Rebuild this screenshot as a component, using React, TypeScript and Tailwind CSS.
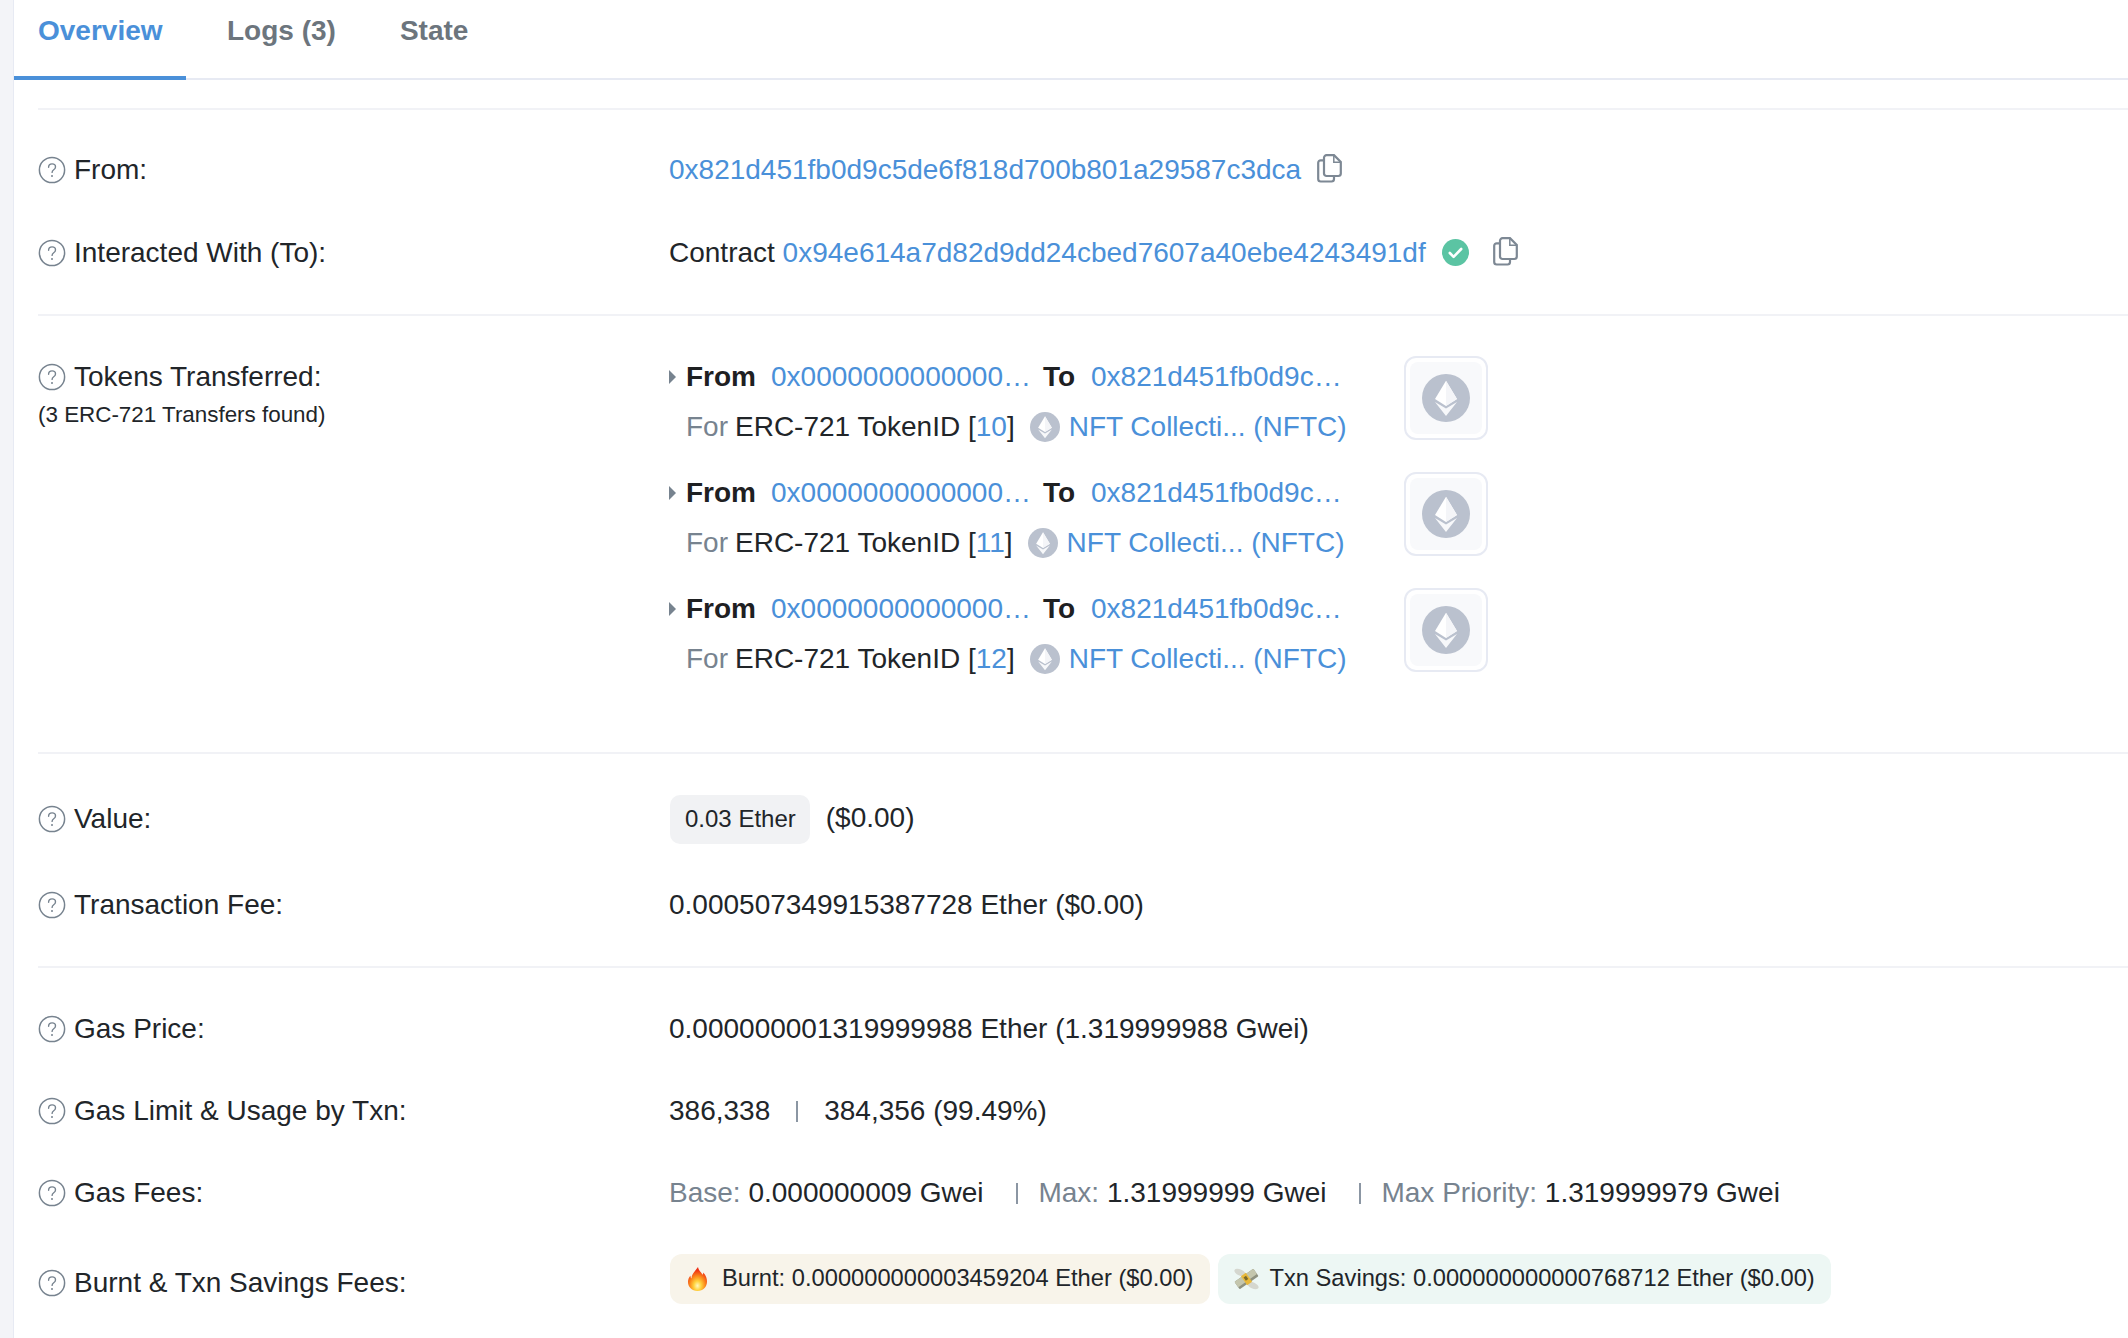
import React from 'react'

const LINK = 'text-[#4a90d9]'

function HelpIcon() {
  return (
    <svg width="28" height="28" viewBox="0 0 28 28" fill="none" className="shrink-0">
      <circle cx="14" cy="14" r="12.6" stroke="#77838f" strokeWidth="1.5" />
      <path d="M10.6 11.2c0-2 1.5-3.3 3.5-3.3s3.4 1.2 3.4 3c0 1.4-.8 2.1-1.8 2.8-1.1.8-1.6 1.3-1.6 2.7" stroke="#77838f" strokeWidth="1.4" strokeLinecap="round" />
      <circle cx="14" cy="20" r="1" fill="#77838f" />
    </svg>
  )
}

function CopyIcon() {
  return (
    <svg width="25" height="29" viewBox="0 0 25 29" fill="none" className="shrink-0">
      <path d="M9.500 1.200H17L23.800 8V19.500A2.500 2.500 0 0 1 21.300 22H9.500A2.500 2.500 0 0 1 7 19.500V3.700A2.500 2.500 0 0 1 9.500 1.200Z" stroke="#7d8894" strokeWidth="2.200" />
      <path d="M16.800 1.500V8.200H23.500" stroke="#7d8894" strokeWidth="1.500" />
      <path d="M7 6.300H3.700A2.500 2.500 0 0 0 1.200 8.800V25A2.500 2.500 0 0 0 3.700 27.500H14.500A2.500 2.500 0 0 0 17 25V22" stroke="#7d8894" strokeWidth="2.200" />
    </svg>
  )
}

function VerifiedIcon() {
  return (
    <svg width="27" height="27" viewBox="0 0 27 27" className="shrink-0">
      <circle cx="13.500" cy="13.500" r="13.500" fill="#5bc4a3" />
      <path d="M7.800 14l3.800 3.800 7.600-7.800" stroke="#fff" strokeWidth="2.600" fill="none" strokeLinecap="round" strokeLinejoin="round" />
    </svg>
  )
}

function EthCircle({ size }: { size: number }) {
  return (
    <svg width={size} height={size} viewBox="0 0 48 48" className="shrink-0">
      <circle cx="24" cy="24" r="24" fill="#bac1ce" />
      <path d="M24 6.700 13 25 24 32 35 25Z" fill="#fff" />
      <path d="M24 6.700 35 25 24 32Z" fill="#f4f5f8" />
      <path d="M13 28 24 34.500 35 28 24 42Z" fill="#f7f8fa" />
    </svg>
  )
}

function FireIcon() {
  return (
    <svg width="19" height="24" viewBox="0 0 19 24" className="shrink-0">
      <defs>
        <radialGradient id="flame" cx="50%" cy="78%" r="65%">
          <stop offset="0%" stopColor="#fff8c0" />
          <stop offset="30%" stopColor="#ffd23c" />
          <stop offset="62%" stopColor="#fb8a1c" />
          <stop offset="100%" stopColor="#ee2f14" />
        </radialGradient>
      </defs>
      <path d="M10 0c.6 3.500 3 5 4.600 7.800.5-.8.7-1.500.7-2.300C18 8.500 19 11.500 19 14.500 19 20 15 24 9.500 24S0 20 0 14.800c0-2.300.9-4.300 2.500-6.300-.1 1.200.2 2.200 1 3C3.300 7.500 7 4.500 10 0Z" fill="url(#flame)" />
    </svg>
  )
}

function MoneyIcon() {
  return (
    <svg width="25" height="22" viewBox="0 0 25 22" className="shrink-0">
      <ellipse cx="6" cy="4.500" rx="6" ry="3" transform="rotate(25 6 4.500)" fill="#d5d7cf" />
      <ellipse cx="19" cy="17.500" rx="6" ry="3" transform="rotate(25 19 17.500)" fill="#d5d7cf" />
      <g transform="rotate(-35 12.500 11)">
        <rect x="1" y="6.500" width="23" height="9" rx="1" fill="#8e917f" />
        <rect x="1" y="6.500" width="23" height="6.500" rx="1" fill="#c4c6ad" />
        <rect x="9.500" y="5.500" width="6" height="11" fill="#e9b93a" />
        <rect x="11" y="8" width="3" height="4" fill="#7c6a2a" />
      </g>
    </svg>
  )
}

function Sep({ className }: { className: string }) {
  return <span className={`w-[2px] h-[21px] shrink-0 bg-[#8b96a3] ${className}`} />
}

function Label({ text, sub }: { text: string; sub?: string }) {
  return (
    <div className="w-[631px] shrink-0">
      <div className="flex items-center gap-[8px] h-[34px] text-[#212529]">
        <HelpIcon />
        <span>{text}</span>
      </div>
      {sub && <div className="mt-[5px] text-[22.400px] leading-[32px] text-[#212529]">{sub}</div>}
    </div>
  )
}

function Row({ label, children }: { label: string; children: React.ReactNode }) {
  return (
    <div className="flex items-center h-[82px]">
      <Label text={label} />
      <div className="flex items-center">{children}</div>
    </div>
  )
}

function Transfer({ id }: { id: string }) {
  return (
    <div className="flex h-[116px]">
      <div className="w-[374px] shrink-0 pt-[2px]">
        <div className="flex items-center h-[34px]">
          <span className="w-0 h-0 border-y-[7px] border-y-transparent border-l-[7px] border-l-[#77838f] mr-[10px]" />
          <b className="font-bold text-[#1e2022] w-[85px]">From</b>
          <span className={LINK}>0x0000000000000…</span>
        </div>
        <div className="flex items-center h-[34px] mt-[16px] pl-[17px] whitespace-nowrap">
          <span className="text-[#77838f] mr-[7px]">For</span>
          <span>ERC-721 TokenID [</span>
          <span className={LINK}>{id}</span>
          <span>]</span>
          <span className="ml-[15px] mr-[9px]"><EthCircle size={30} /></span>
          <span className={LINK}>NFT Collecti... (NFTC)</span>
        </div>
      </div>
      <div className="w-[422px] shrink-0 pt-[2px]">
        <div className="flex items-center h-[34px]">
          <b className="font-bold text-[#1e2022] w-[48px]">To</b>
          <span className={LINK}>0x821d451fb0d9c…</span>
        </div>
      </div>
      <div className="w-[84px] h-[84px] -ml-[61px] -mt-[2px] shrink-0 rounded-[12px] border-2 border-[#e7eaf3] bg-white p-[4px]">
        <div className="w-full h-full rounded-[8px] bg-[#f8f9fb] flex items-center justify-center">
          <EthCircle size={48} />
        </div>
      </div>
    </div>
  )
}

export default function App() {
  return (
    <div className="w-[2128px] h-[1338px] flex overflow-hidden bg-white text-[28px] text-[#212529] font-['Liberation_Sans',Arial,sans-serif]">
      <div className="w-[14px] shrink-0 bg-[#f3f4f8] border-r border-[#e7eaf3]" />
      <div className="flex-1 min-w-0">
        {/* tabs */}
        <div className="flex h-[80px] border-b-2 border-[#e7eaf3] font-bold">
          <div className="w-[172px] h-[80px] pl-[24px] pt-[13px] text-[#4a90d9] border-b-4 border-[#4a90d9] leading-[36px]">Overview</div>
          <div className="ml-[41px] pt-[13px] leading-[36px] text-[#6c757d]">Logs (3)</div>
          <div className="ml-[64px] pt-[13px] leading-[36px] text-[#6c757d]">State</div>
        </div>

        <div className="pl-[24px]">
          <div className="h-[30px] border-b-2 border-[#f1f2f6]" />

          <div className="pt-[19px] pb-[20px] border-b-2 border-[#f1f2f6]">
            <Row label="From:">
              <span className={LINK}>0x821d451fb0d9c5de6f818d700b801a29587c3dca</span>
              <span className="ml-[16px] -mt-[3px]"><CopyIcon /></span>
            </Row>
            <div className="mt-[1px]">
              <Row label="Interacted With (To):">
                <span>Contract&nbsp;</span>
                <span className={LINK}>0x94e614a7d82d9dd24cbed7607a40ebe4243491df</span>
                <span className="ml-[16px] -mt-[2px]"><VerifiedIcon /></span>
                <span className="ml-[24px] -mt-[3px]"><CopyIcon /></span>
              </Row>
            </div>
          </div>

          <div className="flex pt-[42px] h-[438px] border-b-2 border-[#f1f2f6]">
            <div className="pt-[2px]"><Label text="Tokens Transferred:" sub="(3 ERC-721 Transfers found)" /></div>
            <div>
              <Transfer id="10" />
              <Transfer id="11" />
              <Transfer id="12" />
            </div>
          </div>

          <div className="pt-[41px] pb-[44px] border-b-2 border-[#f1f2f6]">
            <div className="flex items-center h-[48px]">
              <Label text="Value:" />
              <span className="h-[49px] ml-[1px] pl-[15px] pr-[14px] flex items-center rounded-[10px] bg-[#f1f2f4] text-[24px]">0.03 Ether</span>
              <span className="ml-[16px] -mt-[2px]">($0.00)</span>
            </div>
            <div className="flex items-center h-[34px] mt-[45px]">
              <Label text="Transaction Fee:" />
              <span>0.000507349915387728 Ether ($0.00)</span>
            </div>
          </div>

          <div className="pt-[20px]">
            <Row label="Gas Price:">
              <span>0.000000001319999988 Ether (1.319999988 Gwei)</span>
            </Row>
            <Row label="Gas Limit &amp; Usage by Txn:">
              <span>386,338</span>
              <Sep className="ml-[26px] mr-[26px]" />
              <span>384,356 (99.49%)</span>
            </Row>
            <Row label="Gas Fees:">
              <span className="text-[#77838f]">Base:&nbsp;</span>
              <span>0.000000009 Gwei</span>
              <Sep className="ml-[33px] mr-[20px]" />
              <span className="text-[#77838f]">Max:&nbsp;</span>
              <span>1.31999999 Gwei</span>
              <Sep className="ml-[33px] mr-[20px]" />
              <span className="text-[#77838f]">Max Priority:&nbsp;</span>
              <span>1.319999979 Gwei</span>
            </Row>
            <div className="flex h-[50px] mt-[20px]">
              <div className="pt-[12px]"><Label text="Burnt &amp; Txn Savings Fees:" /></div>
              <div className="flex gap-[8px] ml-[1px] text-[23.700px]">
                <span className="h-[50px] pl-[18px] pr-[16px] flex items-center gap-[15px] rounded-[12px] bg-[#f8f4ea]">
                  <FireIcon />
                  Burnt: 0.000000000003459204 Ether ($0.00)
                </span>
                <span className="h-[50px] pl-[16px] pr-[16px] flex items-center gap-[11px] rounded-[12px] bg-[#edf7f4]">
                  <MoneyIcon />
                  Txn Savings: 0.000000000000768712 Ether ($0.00)
                </span>
              </div>
            </div>
          </div>
        </div>
      </div>
    </div>
  )
}
